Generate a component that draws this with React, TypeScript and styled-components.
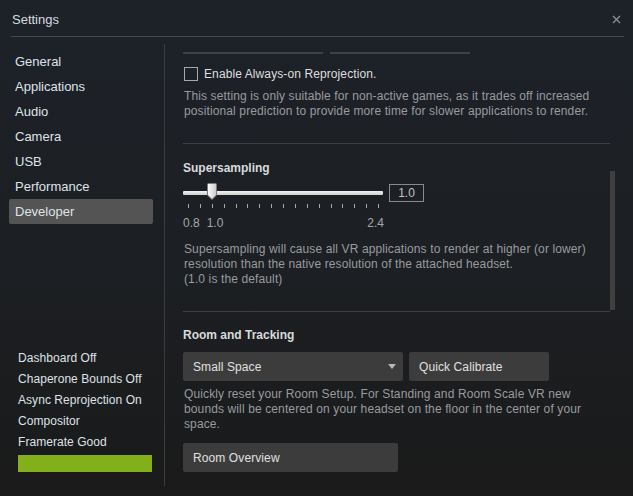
import React from "react";
import styled, { createGlobalStyle } from "styled-components";

const Global = createGlobalStyle`
  html, body { margin: 0; padding: 0; background: #1a1b1c; }
  * { box-sizing: border-box; }
`;

const Window = styled.div`
  width: 633px;
  height: 496px;
  background: linear-gradient(#1d2229 0%, #1c1f23 55%, #1a1a1a 100%);
  font-family: "Liberation Sans", Arial, sans-serif;
  color: #dcdcdc;
  display: flex;
  flex-direction: column;
  overflow: hidden;
`;

const Header = styled.div`
  height: 37px;
  margin: 0 9px 0 11px;
  border-bottom: 1px solid #45484b;
  display: flex;
  align-items: center;
  justify-content: space-between;
  padding: 2px 3px 0 1px;
`;

const Title = styled.div`
  font-size: 13px;
  color: #d6dae0;
`;

const Close = styled.div`
  width: 9px;
  height: 9px;
  display: flex;
`;

const Body = styled.div`
  flex: 1;
  display: flex;
`;

const Sidebar = styled.div`
  width: 165px;
  margin: 7px 0 10px 0;
  border-right: 1px solid #3a3c3e;
  display: flex;
  flex-direction: column;
  padding: 5px 11px 14px 9px;
`;

const NavItem = styled.div<{ $active?: boolean }>`
  height: 25px;
  display: flex;
  align-items: center;
  padding-left: 6px;
  font-size: 13px;
  color: #dfe3e8;
  border-radius: 2px;
  background: ${(p) => (p.$active ? "#545454" : "transparent")};
`;

const Status = styled.div`
  margin-top: auto;
  padding-left: 9px;
  display: flex;
  flex-direction: column;
`;

const StatusLine = styled.div`
  height: 21px;
  display: flex;
  align-items: center;
  font-size: 12px;
  letter-spacing: 0.05px;
  color: #dde2e8;
`;

const StatusBar = styled.div`
  margin-top: 3px;
  height: 17px;
  width: 134px;
  background: #83b01a;
`;

const Main = styled.div`
  position: relative;
  flex: 1;
  padding: 15px 0 0 18px;
  display: flex;
  flex-direction: column;
`;

const Inner = styled.div`
  width: 427px;
  display: flex;
  flex-direction: column;
`;

const InputStubs = styled.div`
  display: flex;
  gap: 7px;
`;

const Stub = styled.div`
  width: 140px;
  height: 2px;
  background: #3e4145;
`;

const CheckRow = styled.div`
  margin-top: 13px;
  display: flex;
  align-items: center;
  gap: 6px;
  height: 14px;
`;

const Box = styled.div`
  width: 14px;
  height: 14px;
  border: 1px solid #a8a8a8;
  margin-left: 1px;
`;

const Label = styled.div`
  font-size: 12px;
  letter-spacing: 0.1px;
  color: #dedede;
`;

const Desc = styled.div<{ $mt: number }>`
  margin-top: ${(p) => p.$mt}px;
  padding-left: 1px;
  font-size: 12px;
  letter-spacing: 0.12px;
  line-height: 15px;
  color: #999b9e;
`;

const Sep = styled.div<{ $mt: number }>`
  margin-top: ${(p) => p.$mt}px;
  height: 1px;
  background: #3d3f42;
`;

const Heading = styled.div<{ $mt: number }>`
  margin-top: ${(p) => p.$mt}px;
  font-size: 12px;
  font-weight: bold;
  color: #d8dadc;
  line-height: 14px;
`;

const SliderRow = styled.div`
  margin-top: 9px;
  display: flex;
  align-items: center;
  gap: 6px;
  height: 18px;
`;

const Track = styled.div`
  position: relative;
  width: 200px;
  height: 4px;
  background: linear-gradient(#f2f2f2, #cfcfcf);
  border-radius: 1px;
`;

const Thumb = styled.div`
  position: absolute;
  left: 24px;
  top: -8px;
  width: 10px;
  height: 17px;
  display: flex;
`;

const ValueBox = styled.div`
  width: 35px;
  height: 18px;
  border: 1px solid #8a8a8a;
  font-size: 12px;
  color: #bfc3c7;
  display: flex;
  align-items: center;
  justify-content: center;
`;

const Ticks = styled.div`
  margin: 2px 0 0 5px;
  width: 191px;
  height: 4px;
  display: flex;
  justify-content: space-between;
`;

const Tick = styled.div`
  width: 1px;
  height: 4px;
  background: #a8a8a8;
`;

const AxisLabels = styled.div`
  margin-top: 8px;
  width: 201px;
  display: flex;
  font-size: 12px;
  color: #a5a8ab;
  line-height: 14px;
`;

const AxisLabel = styled.span<{ $ml?: string }>`
  margin-left: ${(p) => p.$ml || "0"};
`;

const ButtonRow = styled.div<{ $mt: number }>`
  margin-top: ${(p) => p.$mt}px;
  display: flex;
  gap: 6px;
`;

const Button = styled.div<{ $w: number }>`
  width: ${(p) => p.$w}px;
  height: 29px;
  background: #3c3c3c;
  border-radius: 2px;
  display: flex;
  align-items: center;
  justify-content: space-between;
  padding: 0 7px 0 10px;
  font-size: 12px;
  letter-spacing: 0.1px;
  color: #e0e0e0;
`;

const Scrollbar = styled.div`
  position: absolute;
  left: 445px;
  top: 134px;
  width: 5px;
  height: 139px;
  background: #3f3f3f;
`;

const nav = ["General", "Applications", "Audio", "Camera", "USB", "Performance", "Developer"];
const status = ["Dashboard Off", "Chaperone Bounds Off", "Async Reprojection On", "Compositor", "Framerate Good"];

export default function App() {
  return (
    <>
      <Global />
      <Window>
        <Header>
          <Title>Settings</Title>
          <Close>
            <svg width="9" height="9" viewBox="0 0 9 9">
              <path d="M1 1 L8 8 M8 1 L1 8" stroke="#8a8d90" strokeWidth="1.4" />
            </svg>
          </Close>
        </Header>
        <Body>
          <Sidebar>
            {nav.map((n) => (
              <NavItem key={n} $active={n === "Developer"}>
                {n}
              </NavItem>
            ))}
            <Status>
              {status.map((s) => (
                <StatusLine key={s}>{s}</StatusLine>
              ))}
              <StatusBar />
            </Status>
          </Sidebar>
          <Main>
            <Inner>
              <InputStubs>
                <Stub />
                <Stub />
              </InputStubs>
              <CheckRow>
                <Box />
                <Label>Enable Always-on Reprojection.</Label>
              </CheckRow>
              <Desc $mt={8}>
                This setting is only suitable for non-active games, as it trades off increased
                positional prediction to provide more time for slower applications to render.
              </Desc>
              <Sep $mt={24} />
              <Heading $mt={17}>Supersampling</Heading>
              <SliderRow>
                <Track>
                  <Thumb>
                    <svg width="10" height="17" viewBox="0 0 10 17">
                      <defs>
                        <linearGradient id="tg" x1="0" y1="0" x2="1" y2="0">
                          <stop offset="0" stopColor="#ffffff" />
                          <stop offset="1" stopColor="#c8c8c8" />
                        </linearGradient>
                      </defs>
                      <path
                        d="M1.5 0.5 H8.5 Q9.5 0.5 9.5 1.5 V12 L5 16.5 L0.5 12 V1.5 Q0.5 0.5 1.5 0.5 Z"
                        fill="url(#tg)"
                        stroke="#7a7a7a"
                        strokeWidth="1"
                      />
                    </svg>
                  </Thumb>
                </Track>
                <ValueBox>1.0</ValueBox>
              </SliderRow>
              <Ticks>
                {Array.from({ length: 17 }).map((_, i) => (
                  <Tick key={i} />
                ))}
              </Ticks>
              <AxisLabels>
                <AxisLabel>0.8</AxisLabel>
                <AxisLabel $ml="7px">1.0</AxisLabel>
                <AxisLabel $ml="auto">2.4</AxisLabel>
              </AxisLabels>
              <Desc $mt={12}>
                Supersampling will cause all VR applications to render at higher (or lower)
                <br />
                resolution than the native resolution of the attached headset.
                <br />
                (1.0 is the default)
              </Desc>
              <Sep $mt={24} />
              <Heading $mt={16}>Room and Tracking</Heading>
              <ButtonRow $mt={10}>
                <Button $w={220}>
                  <span>Small Space</span>
                  <svg width="8" height="5" viewBox="0 0 8 5">
                    <path d="M0 0 H8 L4 5 Z" fill="#b8b8b8" />
                  </svg>
                </Button>
                <Button $w={140}>Quick Calibrate</Button>
              </ButtonRow>
              <Desc $mt={6}>
                Quickly reset your Room Setup. For Standing and Room Scale VR new
                <br />
                bounds will be centered on your headset on the floor in the center of your
                <br />
                space.
              </Desc>
              <ButtonRow $mt={11}>
                <Button $w={215}>Room Overview</Button>
              </ButtonRow>
            </Inner>
            <Scrollbar />
          </Main>
        </Body>
      </Window>
    </>
  );
}
